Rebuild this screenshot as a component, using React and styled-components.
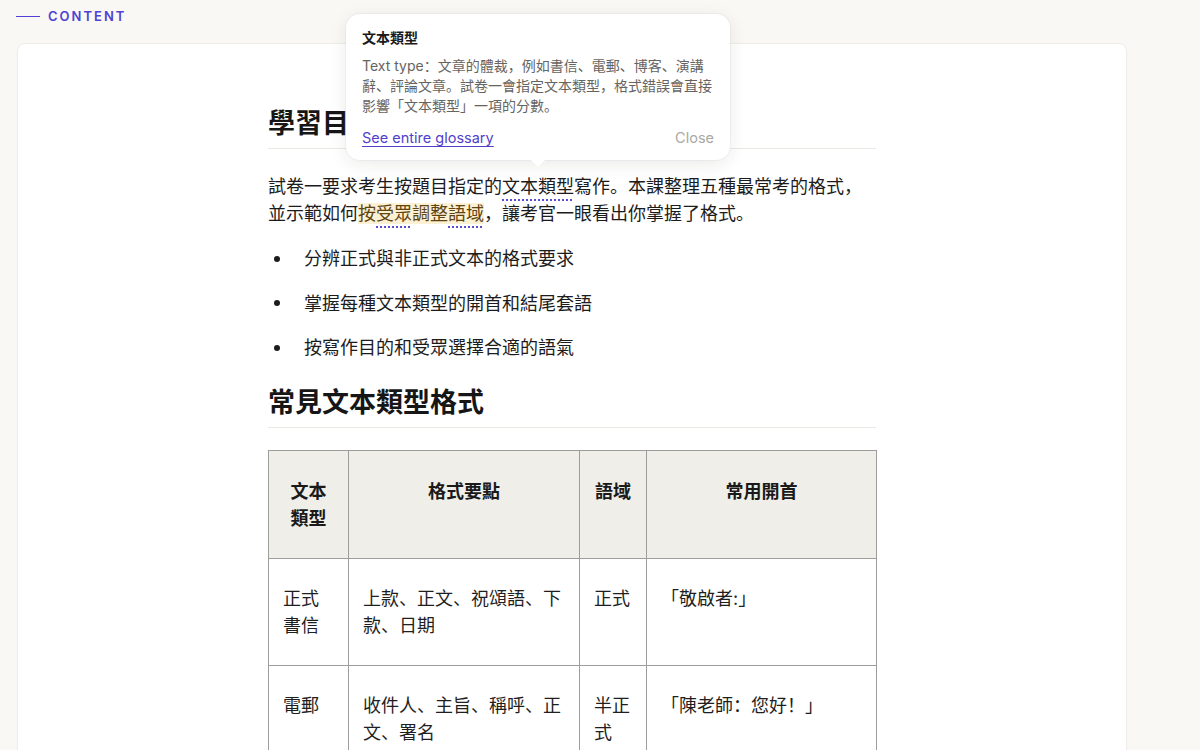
import React from 'react';
import styled, { createGlobalStyle } from 'styled-components';

const GlobalStyle = createGlobalStyle`
  html, body {
    margin: 0;
    padding: 0;
    background: #f9f8f5;
  }
  body {
    font-family: "Inter", "Noto Sans CJK SC", sans-serif;
    color: #1c1c1c;
  }
`;

const Page = styled.div`
  padding: 8px 0 0 16px;
  height: 742px;
  overflow: hidden;
`;

const SectionLabel = styled.div`
  display: flex;
  align-items: center;
  gap: 8px;
  height: 16px;
  color: #5140d4;
  font-size: 13px;
  font-weight: 600;
  letter-spacing: 2px;
  &::before {
    content: "";
    width: 24px;
    height: 1px;
    background: #5140d4;
  }
`;

const Card = styled.div`
  margin-top: 19px;
  margin-left: 1px;
  width: 1108px;
  min-height: 760px;
  background: #ffffff;
  border: 1px solid #eeece7;
  border-radius: 8px;
  box-shadow: 0 1px 2px rgba(0, 0, 0, 0.02);
  padding-top: 62px;
`;

const Article = styled.article`
  width: 608px;
  margin: 0 auto;
`;

const Heading = styled.h2`
  margin: ${p => p.$top || 0}px 0 0;
  padding-bottom: 7px;
  border-bottom: 1px solid #ebe9e4;
  font-size: 27px;
  line-height: 35px;
  font-weight: 700;
  color: #161616;
`;

const Para = styled.p`
  margin: 24px 0 0;
  font-size: 18px;
  line-height: 27px;
`;

const Term = styled.span`
  position: relative;
  text-decoration: underline dotted #5b4fd0;
  text-decoration-thickness: 2px;
  text-underline-offset: 6px;
`;

const Highlight = styled.span`
  background: #fdf1d3;
  color: #5e4410;
`;

const List = styled.ul`
  list-style: none;
  margin: 18px 0 0;
  padding: 0;
  display: flex;
  flex-direction: column;
  gap: 17.5px;
`;

const Item = styled.li`
  display: flex;
  align-items: center;
  font-size: 18px;
  line-height: 27px;
  &::before {
    content: "";
    flex-shrink: 0;
    width: 6px;
    height: 6px;
    border-radius: 50%;
    background: #1c1c1c;
    margin: 0 24px 0 6px;
  }
`;

const Table = styled.table`
  margin-top: 22px;
  width: 608px;
  border-collapse: collapse;
  table-layout: fixed;
  font-size: 18px;
  line-height: 27px;
`;

const Th = styled.th`
  width: ${p => p.$w}px;
  background: #efeee9;
  border: 1px solid #9d9d9b;
  padding: 27px 14px 26px;
  height: 106px;
  box-sizing: border-box;
  vertical-align: top;
  text-align: center;
  font-weight: 700;
  color: #1a1a1a;
`;

const Td = styled.td`
  border: 1px solid #9d9d9b;
  padding: 26px 14px;
  height: 106px;
  box-sizing: border-box;
  vertical-align: top;
  color: #1f1f1f;
`;

const Tooltip = styled.div`
  position: absolute;
  z-index: 10;
  left: 50%;
  bottom: calc(100% + 16px);
  transform: translateX(-50%);
  width: 384px;
  box-sizing: border-box;
  padding: 14px 16px 12px;
  background: #ffffff;
  border-radius: 14px;
  box-shadow: 0 4px 18px rgba(40, 35, 20, 0.09), 0 0 0 1px rgba(0, 0, 0, 0.03);
  text-decoration: none;
  color: #1a1a1a;
  &::after {
    content: "";
    position: absolute;
    left: 50%;
    bottom: -5px;
    width: 10px;
    height: 10px;
    background: #ffffff;
    transform: translateX(-50%) rotate(45deg);
  }
`;

const TipTitle = styled.div`
  font-size: 14px;
  font-weight: 700;
  line-height: 20px;
`;

const TipBody = styled.div`
  margin-top: 8px;
  font-size: 14px;
  line-height: 20px;
  color: #666461;
`;

const TipFooter = styled.div`
  margin-top: 12px;
  display: flex;
  justify-content: space-between;
  align-items: center;
  font-size: 14.5px;
  line-height: 20px;
`;

const TipLink = styled.a`
  color: #4f3fc9;
  text-decoration: underline;
  text-underline-offset: 3px;
  text-decoration-color: #4f3fc9;
`;

const TipClose = styled.span`
  color: #aaa8a4;
`;

const rows = [
  { type: '正式書信', points: '上款、正文、祝頌語、下款、日期', register: '正式', opening: '「敬啟者:」' },
  { type: '電郵', points: '收件人、主旨、稱呼、正文、署名', register: '半正式', opening: '「陳老師：您好！」' },
];

export default function App() {
  return (
    <Page>
      <GlobalStyle />
      <SectionLabel>CONTENT</SectionLabel>
      <Card>
        <Article>
          <Heading>學習目標</Heading>
          <Para>
            試卷一要求考生按題目指定的
            <Term>
              文本類型
              <Tooltip>
                <TipTitle>文本類型</TipTitle>
                <TipBody>
                  Text type：文章的體裁，例如書信、電郵、博客、演講辭、評論文章。試卷一會指定文本類型，格式錯誤會直接影響「文本類型」一項的分數。
                </TipBody>
                <TipFooter>
                  <TipLink href="#">See entire glossary</TipLink>
                  <TipClose>Close</TipClose>
                </TipFooter>
              </Tooltip>
            </Term>
            寫作。本課整理五種最常考的格式，並示範如何
            <Highlight>
              按<Term>受眾</Term>調整<Term>語域</Term>
            </Highlight>
            ，讓考官一眼看出你掌握了格式。
          </Para>
          <List>
            <Item>分辨正式與非正式文本的格式要求</Item>
            <Item>掌握每種文本類型的開首和結尾套語</Item>
            <Item>按寫作目的和受眾選擇合適的語氣</Item>
          </List>
          <Heading $top={24}>常見文本類型格式</Heading>
          <Table>
            <thead>
              <tr>
                <Th $w={80}>文本類型</Th>
                <Th $w={231}>格式要點</Th>
                <Th $w={67}>語域</Th>
                <Th $w={230}>常用開首</Th>
              </tr>
            </thead>
            <tbody>
              {rows.map(r => (
                <tr key={r.type}>
                  <Td>{r.type}</Td>
                  <Td>{r.points}</Td>
                  <Td>{r.register}</Td>
                  <Td>{r.opening}</Td>
                </tr>
              ))}
            </tbody>
          </Table>
        </Article>
      </Card>
    </Page>
  );
}
